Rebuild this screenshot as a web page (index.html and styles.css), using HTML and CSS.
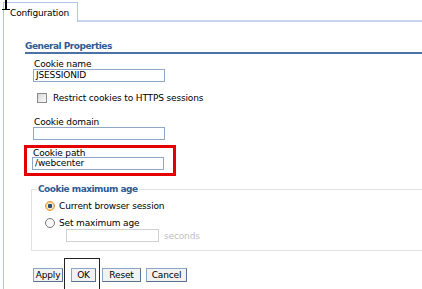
FILE: index.html
```html
<!DOCTYPE html>
<html lang="en">
<head>
    <meta charset="UTF-8">
    <title>Configuration</title>
    <link rel="stylesheet" href="styles.css">
</head>
<body>

<svg class="cursor" width="11" height="12" viewBox="0 0 11 12">
    <rect x="5" y="0" width="2" height="10" fill="#000"/>
    <rect x="2" y="9" width="8" height="1" fill="#000"/>
</svg>

<div class="tabbar">
    <div class="tab">Configuration</div>
    <div class="tab-fill"></div>
</div>

<div class="panel">
    <div class="section-title">General Properties</div>

    <div class="field first">
        <label class="label">Cookie name</label>
        <div class="input">JSESSIONID</div>
    </div>

    <div class="check-row">
        <span class="checkbox"></span>
        <span>Restrict cookies to HTTPS sessions</span>
    </div>

    <div class="field domain">
        <label class="label">Cookie domain</label>
        <div class="input"></div>
    </div>

    <div class="highlight">
        <label class="label">Cookie path</label>
        <div class="input">/webcenter</div>
    </div>

    <fieldset class="group">
        <legend>Cookie maximum age</legend>
        <div class="radio-row first">
            <span class="radio checked"></span>
            <span>Current browser session</span>
        </div>
        <div class="radio-row">
            <span class="radio"></span>
            <span>Set maximum age</span>
        </div>
        <div class="age-row">
            <div class="input small"></div>
            <span class="unit">seconds</span>
        </div>
    </fieldset>

    <div class="buttons">
        <button class="btn apply">Apply</button>
        <span class="focus-box"><button class="btn">OK</button></span>
        <button class="btn reset">Reset</button>
        <button class="btn cancel">Cancel</button>
    </div>
</div>

</body>
</html>
```

FILE: styles.css
```css
* {
    box-sizing: border-box;
}

body {
    margin: 0;
    background-color: #fff;
    font-family: "DejaVu Sans", Verdana, sans-serif;
    font-size: 9px;
    line-height: 10px;
    letter-spacing: -0.15px;
    color: #000;
    overflow: hidden;
}

.cursor {
    position: absolute;
    left: 0;
    top: 0;
}

.tabbar {
    display: flex;
    padding-top: 2px;
    padding-left: 3px;
}

.tab {
    height: 20px;
    width: 75px;
    padding: 5px 0 0 6px;
    border: 1px solid #b4c6e6;
    border-bottom: none;
}

.tab-fill {
    flex: 1;
    border-bottom: 2px solid #c6d4ee;
}

.panel {
    margin-left: 3px;
    border-left: 1px solid #b4c6e6;
    padding: 19px 0 0 21px;
    height: 280px;
}

.section-title {
    font-weight: bold;
    letter-spacing: -0.5px;
    color: #2d5b94;
    padding-bottom: 1px;
    border-bottom: 2px solid #4b72a6;
}

.field {
    padding-left: 8px;
}

.field.first {
    padding-top: 5px;
}

.field.domain {
    padding-top: 14px;
}

.field .label {
    height: 10px;
}

.label {
    display: block;
    height: 9px;
    padding-left: 1px;
}

.input {
    width: 132px;
    height: 13px;
    border: 1px solid #8fa8c8;
    padding: 0 2px;
    line-height: 11px;
}

.input.small {
    width: 93px;
    border-color: #d0d0d0;
}

.check-row {
    display: flex;
    align-items: center;
    height: 10px;
    margin-top: 11px;
    padding-left: 12px;
}

.checkbox {
    width: 10px;
    height: 10px;
    border: 1px solid #8a8a8a;
    background: linear-gradient(135deg, #d8d8d8, #fbfbfb);
    margin-right: 6px;
}

.highlight {
    width: 152px;
    height: 31px;
    margin: 5px 0 0 -1px;
    border: 3px solid #e50000;
    padding-left: 5px;
}

.group {
    margin: 8px 0 0 6px;
    padding: 0 0 8px 13px;
    border: 1px solid #e2e2e2;
    border-right: none;
}

.group legend {
    font-weight: bold;
    letter-spacing: -0.5px;
    color: #2d5b94;
    padding: 0 1px;
    margin-left: -8px;
}

.radio-row {
    display: flex;
    align-items: center;
    margin-top: 3px;
    height: 14px;
}

.radio-row.first {
    margin-top: 5px;
}

.radio {
    width: 10px;
    height: 10px;
    border-radius: 50%;
    border: 1px solid #7a7a7a;
    background: #f8f8f8;
    margin-right: 4px;
}

.radio.checked {
    border-color: #e59a3a;
    box-shadow: inset 0 0 0 1px #f6c46e;
    background: radial-gradient(circle, #2c4a6e 0 2px, #f4f4f4 2.5px);
}

.age-row {
    display: flex;
    align-items: center;
    padding-left: 21px;
    margin-top: -1px;
}

.unit {
    color: #c0c0c0;
    margin-left: 5px;
}

.buttons {
    display: flex;
    align-items: center;
    margin-top: 7px;
    padding-left: 8px;
}

.btn {
    font-family: "DejaVu Sans", Verdana, sans-serif;
    font-size: 9px;
    letter-spacing: -0.15px;
    height: 14px;
    padding: 0;
    text-align: center;
    background: #f2f2f2;
    border: 1px solid #8ea6c6;
    border-right-color: #5a7090;
    border-bottom-color: #5a7090;
    color: #000;
    line-height: 12px;
}

.apply {
    width: 30px;
}

.focus-box {
    display: flex;
    align-items: center;
    margin-left: 1px;
    border: 1px solid #222;
    height: 34px;
    padding: 0 3px 0 6px;
}

.focus-box .btn {
    width: 25px;
}

.reset {
    width: 39px;
    margin-left: 2px;
}

.cancel {
    width: 41px;
    margin-left: 5px;
}
```
